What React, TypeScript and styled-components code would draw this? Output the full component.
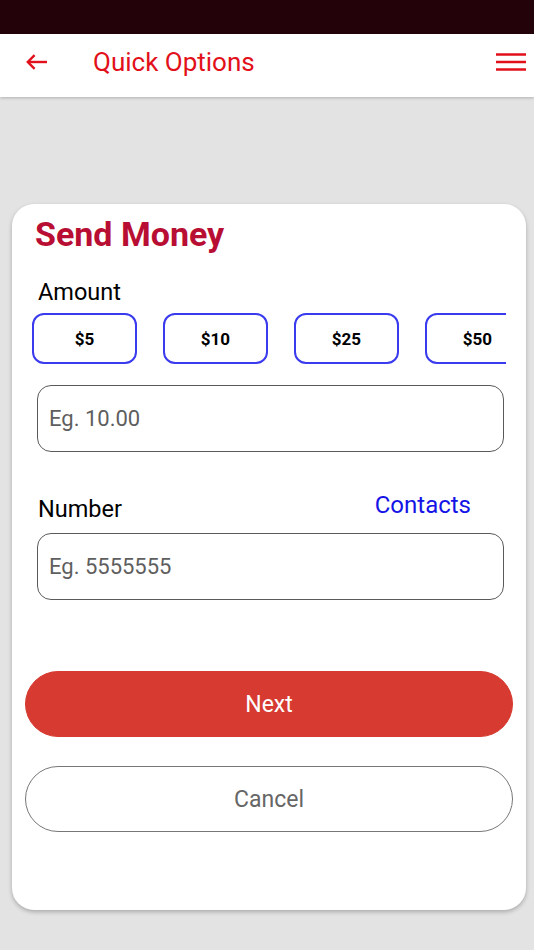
import styled, { createGlobalStyle } from "styled-components"

const GlobalStyle = createGlobalStyle`
  html, body {
    margin: 0;
    padding: 0;
    background: #e3e3e3;
    font-family: Roboto, "Noto Sans", Arial, sans-serif;
  }
  * { box-sizing: border-box; }
`

const Screen = styled.div`
  width: 534px;
  min-height: 950px;
  background: #e3e3e3;
  display: flex;
  flex-direction: column;
`

const StatusBar = styled.div`
  height: 34px;
  background: #230309;
`

const Header = styled.header`
  height: 63px;
  background: #fff;
  display: flex;
  align-items: center;
  padding: 0 8px 7px 26px;
  box-shadow: 0 1px 3px rgba(0, 0, 0, 0.22);
  position: relative;
  z-index: 1;
`

const IconButton = styled.button`
  border: 0;
  background: none;
  padding: 0;
  display: flex;
  cursor: pointer;
`

const Title = styled.h1`
  margin: 0 0 0 46px;
  flex: 1;
  font-size: 26px;
  line-height: 30px;
  font-weight: 400;
  color: #e2101a;
`

const Card = styled.section`
  margin: 107px 8px 0 12px;
  height: 706px;
  background: #fff;
  border-radius: 22px;
  box-shadow: 0 2px 4px rgba(0, 0, 0, 0.25);
  padding: 10px 13px 0;
  display: flex;
  flex-direction: column;
`

const CardTitle = styled.h2`
  margin: 0 0 0 10px;
  font-size: 34px;
  line-height: 40px;
  font-weight: 700;
  color: #b90e33;
`

const Label = styled.span<{ $top?: number }>`
  display: block;
  margin: ${({ $top }) => $top ?? 0}px 0 0 13px;
  font-size: 23.5px;
  line-height: 26px;
  color: #000;
`

const ChipRow = styled.div`
  margin: 8px 7px 0 7px;
  display: flex;
  gap: 26px;
  overflow: hidden;
`

const Chip = styled.button`
  flex: 0 0 105px;
  height: 51px;
  border: 2px solid #3a3aee;
  border-radius: 12px;
  background: #fff;
  font-family: inherit;
  font-size: 17px;
  font-weight: 700;
  color: #000;
  padding: 0;
`

const Field = styled.input<{ $top: number }>`
  display: block;
  margin: ${({ $top }) => $top}px 9px 0 12px;
  height: 67px;
  border: 1px solid #5a5a5a;
  border-radius: 14px;
  padding: 0 11px;
  font-family: inherit;
  font-size: 22px;
  color: #222;
  outline: none;
  &::placeholder {
    color: #5e5e5e;
  }
`

const LabelRow = styled.div`
  margin: 40px 9px 0 0;
  display: flex;
  align-items: flex-end;
  justify-content: space-between;
`

const LinkButton = styled.button`
  border: 0;
  background: none;
  padding: 0;
  margin: 0 33px 4px 0;
  font-family: inherit;
  font-size: 24px;
  line-height: 26px;
  color: #1414e6;
`

const PillButton = styled.button<{ $primary?: boolean; $top: number }>`
  margin-top: ${({ $top }) => $top}px;
  height: 66px;
  border-radius: 33px;
  font-family: inherit;
  font-size: 23px;
  padding: 0;
  background: ${({ $primary }) => ($primary ? "#d63a30" : "#fff")};
  color: ${({ $primary }) => ($primary ? "#fff" : "#666")};
  border: ${({ $primary }) => ($primary ? "1px solid #d63a30" : "1px solid #777")};
`

const amounts = ["$5", "$10", "$25", "$50"]

export default function App() {
  return (
    <Screen>
      <GlobalStyle />
      <StatusBar />
      <Header>
        <IconButton aria-label="Back">
          <svg width="21" height="16" viewBox="0 0 21 16" fill="none" stroke="#e2101a" strokeWidth="2.4">
            <path d="M21 8H2.5" />
            <path d="M8.6 1.2L1.8 8l6.8 6.8" />
          </svg>
        </IconButton>
        <Title>Quick Options</Title>
        <IconButton aria-label="Menu">
          <svg width="30" height="20" viewBox="0 0 30 20" fill="none" stroke="#e2101a" strokeWidth="2.6">
            <path d="M0 2.5h30M0 10h30M0 17.5h30" />
          </svg>
        </IconButton>
      </Header>

      <Card>
        <CardTitle>Send Money</CardTitle>
        <Label $top={25}>Amount</Label>
        <ChipRow>
          {amounts.map((a) => (
            <Chip key={a}>{a}</Chip>
          ))}
        </ChipRow>
        <Field $top={21} placeholder="Eg. 10.00" />

        <LabelRow>
          <Label>Number</Label>
          <LinkButton>Contacts</LinkButton>
        </LabelRow>
        <Field $top={11} placeholder="Eg. 5555555" />

        <PillButton $primary $top={71}>Next</PillButton>
        <PillButton $top={29}>Cancel</PillButton>
      </Card>
    </Screen>
  )
}
